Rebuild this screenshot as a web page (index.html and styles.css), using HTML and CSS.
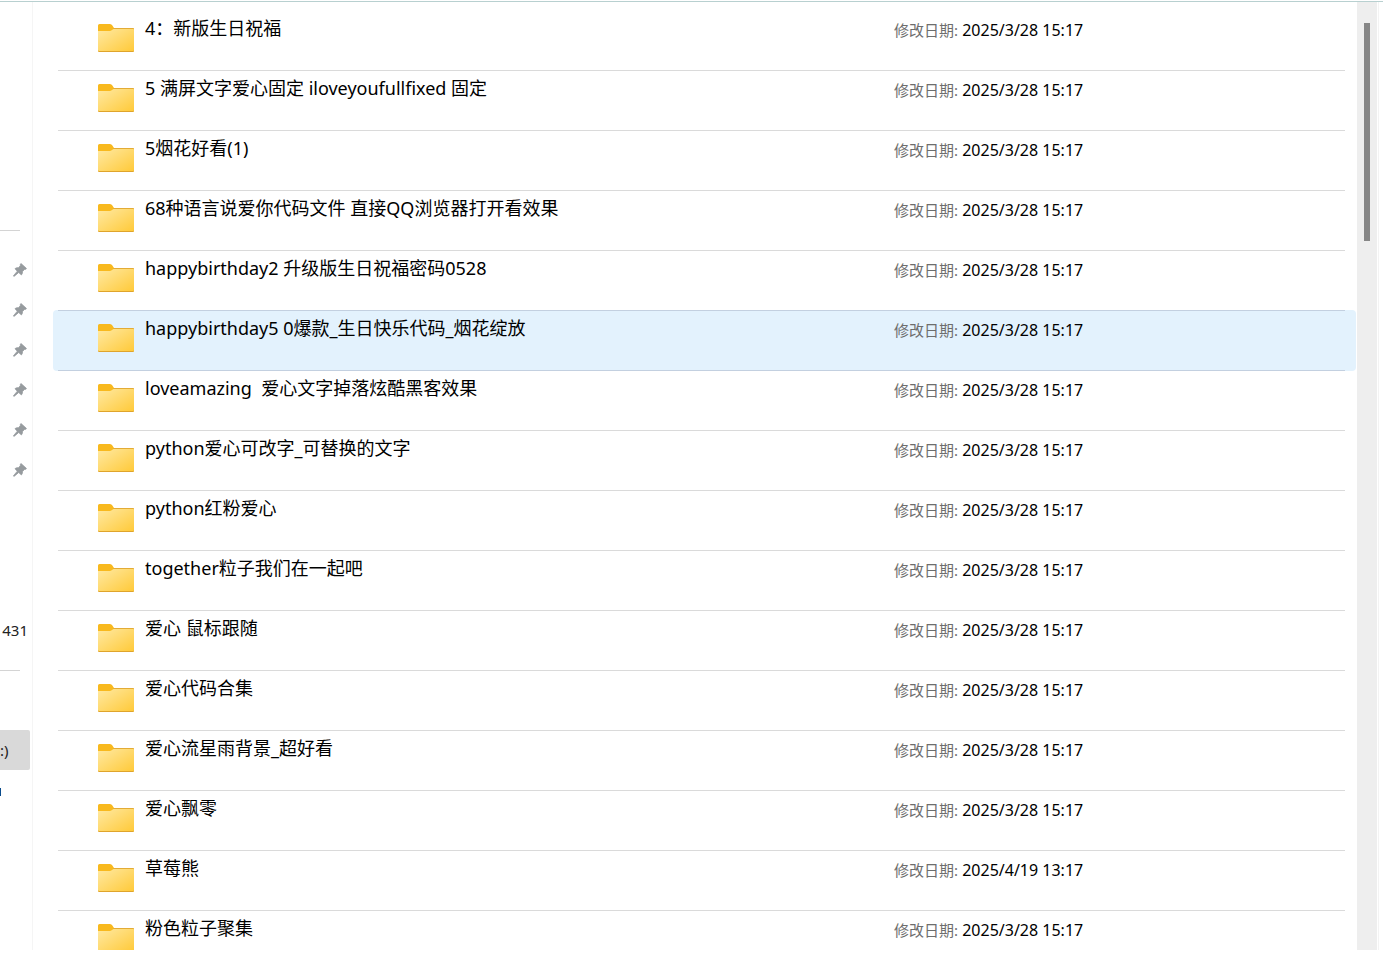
FILE: index.html
```
<!DOCTYPE html>
<html lang="zh-CN">
<head>
    <meta charset="UTF-8">
    <meta name="viewport" content="width=device-width, initial-scale=1.0">
    <link rel="stylesheet" href="styles.css">
    <title>文件</title>
</head>
<body>
<svg class="defs" width="0" height="0" aria-hidden="true">
    <defs>
        <linearGradient id="folder-front" x1="0" y1="0" x2="1" y2="1">
            <stop offset="0" stop-color="#ffe9a2"/>
            <stop offset="1" stop-color="#ffc937"/>
        </linearGradient>
        <symbol id="folder" viewBox="0 0 36 28">
            <path d="M0 1.500Q0 0 1.500 0H11.500q1.500 0 2.500 1L16 4H34.500Q36 4 36 5.500V12H0Z" fill="#f8b91e"/>
            <path d="M0 7H11.500Q13 7 14 6L15.500 5H35Q36 5 36 6V26.500Q36 28 34.500 28H1.500Q0 28 0 26.500Z" fill="url(#folder-front)"/>
            <path d="M0 26V26.500Q0 28 1.500 28H34.500Q36 28 36 26.500V26Q36 27 34.500 27H1.500Q0 27 0 26Z" fill="#dfa42c"/>
            <path d="M15.500 4H35Q36 4 36 5H15Z" fill="#e3ab35"/>
        </symbol>
        <symbol id="pin" viewBox="0 0 14 14">
            <path d="M8.300 .8 13.200 5.200Q13.600 6 12.700 6.300L11.300 6.500 9.500 8.600Q9.600 10.800 8.400 11.900L5.700 9.500 1 13.400.4 12.900 4.300 8.200 2 5.700Q3.200 4.400 5.500 4.700L7.300 2.700 7.400 1.200Q7.600.4 8.300.8Z" fill="#969b9e" stroke="#969b9e" stroke-width=".8" stroke-linejoin="round"/>
        </symbol>
    </defs>
</svg>
<div class="explorer">
    <nav class="sidebar">
        <div class="nav-space nav-space-top"></div>
        <div class="nav-divider"></div>
        <a class="nav-item" href="#" aria-label="已固定 1"><svg class="pin"><use href="#pin"/></svg></a>
        <a class="nav-item" href="#" aria-label="已固定 2"><svg class="pin"><use href="#pin"/></svg></a>
        <a class="nav-item" href="#" aria-label="已固定 3"><svg class="pin"><use href="#pin"/></svg></a>
        <a class="nav-item" href="#" aria-label="已固定 4"><svg class="pin"><use href="#pin"/></svg></a>
        <a class="nav-item" href="#" aria-label="已固定 5"><svg class="pin"><use href="#pin"/></svg></a>
        <a class="nav-item" href="#" aria-label="已固定 6"><svg class="pin"><use href="#pin"/></svg></a>
        <div class="nav-space"></div>
        <a class="nav-item" href="#">431</a>
        <div class="nav-divider"></div>
        <div class="nav-space nav-space-small"></div>
        <a class="nav-item drive active" href="#">:)</a>
        <a class="nav-item drive" href="#" aria-label="网络"><span class="dot"></span></a>
    </nav>
    <main class="files">
        <ul class="file-list">
            <li class="file"><div class="file-row"><svg class="folder"><use href="#folder"/></svg><a class="name" href="#">4：新版生日祝福</a><p class="date"><span class="label">修改日期:</span> 2025/3/28 15:17</p></div></li>
            <li class="file"><div class="file-row"><svg class="folder"><use href="#folder"/></svg><a class="name" href="#">5 满屏文字爱心固定 iloveyoufullfixed 固定</a><p class="date"><span class="label">修改日期:</span> 2025/3/28 15:17</p></div></li>
            <li class="file"><div class="file-row"><svg class="folder"><use href="#folder"/></svg><a class="name" href="#">5烟花好看(1)</a><p class="date"><span class="label">修改日期:</span> 2025/3/28 15:17</p></div></li>
            <li class="file"><div class="file-row"><svg class="folder"><use href="#folder"/></svg><a class="name" href="#">68种语言说爱你代码文件 直接QQ浏览器打开看效果</a><p class="date"><span class="label">修改日期:</span> 2025/3/28 15:17</p></div></li>
            <li class="file"><div class="file-row"><svg class="folder"><use href="#folder"/></svg><a class="name" href="#">happybirthday2 升级版生日祝福密码0528</a><p class="date"><span class="label">修改日期:</span> 2025/3/28 15:17</p></div></li>
            <li class="file selected"><div class="file-row"><svg class="folder"><use href="#folder"/></svg><a class="name" href="#">happybirthday5 0爆款_生日快乐代码_烟花绽放</a><p class="date"><span class="label">修改日期:</span> 2025/3/28 15:17</p></div></li>
            <li class="file"><div class="file-row"><svg class="folder"><use href="#folder"/></svg><a class="name" href="#">loveamazing  爱心文字掉落炫酷黑客效果</a><p class="date"><span class="label">修改日期:</span> 2025/3/28 15:17</p></div></li>
            <li class="file"><div class="file-row"><svg class="folder"><use href="#folder"/></svg><a class="name" href="#">python爱心可改字_可替换的文字</a><p class="date"><span class="label">修改日期:</span> 2025/3/28 15:17</p></div></li>
            <li class="file"><div class="file-row"><svg class="folder"><use href="#folder"/></svg><a class="name" href="#">python红粉爱心</a><p class="date"><span class="label">修改日期:</span> 2025/3/28 15:17</p></div></li>
            <li class="file"><div class="file-row"><svg class="folder"><use href="#folder"/></svg><a class="name" href="#">together粒子我们在一起吧</a><p class="date"><span class="label">修改日期:</span> 2025/3/28 15:17</p></div></li>
            <li class="file"><div class="file-row"><svg class="folder"><use href="#folder"/></svg><a class="name" href="#">爱心 鼠标跟随</a><p class="date"><span class="label">修改日期:</span> 2025/3/28 15:17</p></div></li>
            <li class="file"><div class="file-row"><svg class="folder"><use href="#folder"/></svg><a class="name" href="#">爱心代码合集</a><p class="date"><span class="label">修改日期:</span> 2025/3/28 15:17</p></div></li>
            <li class="file"><div class="file-row"><svg class="folder"><use href="#folder"/></svg><a class="name" href="#">爱心流星雨背景_超好看</a><p class="date"><span class="label">修改日期:</span> 2025/3/28 15:17</p></div></li>
            <li class="file"><div class="file-row"><svg class="folder"><use href="#folder"/></svg><a class="name" href="#">爱心飘零</a><p class="date"><span class="label">修改日期:</span> 2025/3/28 15:17</p></div></li>
            <li class="file"><div class="file-row"><svg class="folder"><use href="#folder"/></svg><a class="name" href="#">草莓熊</a><p class="date"><span class="label">修改日期:</span> 2025/4/19 13:17</p></div></li>
            <li class="file"><div class="file-row"><svg class="folder"><use href="#folder"/></svg><a class="name" href="#">粉色粒子聚集</a><p class="date"><span class="label">修改日期:</span> 2025/3/28 15:17</p></div></li>
        </ul>
    </main>
    <div class="scrollbar"><div class="thumb"></div></div>
    <div class="edge"></div>
</div>
</body>
</html>
```
FILE: styles.css
```
* {
    box-sizing: border-box;
}

body {
    margin: 0;
    padding-top: 1px;
    height: 100vh;
    overflow: hidden;
    background-color: #fff;
    color: #000;
    font-family: "Noto Sans", "Noto Sans CJK SC", sans-serif;
}

a {
    color: inherit;
    text-decoration: none;
}

.defs {
    position: absolute;
}

.explorer {
    display: flex;
    height: calc(100vh - 23px);
    border-top: 1px solid #b8d0d0;
    overflow: hidden;
}

/* navigation pane */
.sidebar {
    flex: 0 0 33px;
    padding-top: 8px;
    border-right: 1px solid #f5f5f5;
    font-size: 15px;
    overflow: hidden;
}

.nav-item {
    display: flex;
    align-items: center;
    justify-content: flex-end;
    height: 40px;
    margin-right: 2px;
    padding-right: 2px;
    color: #222;
}

.pin {
    width: 14px;
    height: 14px;
    margin-right: 1px;
}

.nav-divider {
    height: 40px;
    margin-right: 12px;
    background: linear-gradient(#d4d4d4, #d4d4d4) 0 20px / 100% 1px no-repeat;
}

.nav-space {
    height: 120px;
}

.nav-space-top {
    height: 200px;
}

.nav-space-small {
    height: 40px;
}

.drive {
    justify-content: flex-start;
    margin-right: 2px;
    padding: 0;
}

.active {
    background-color: #d9d9d9;
    border-radius: 0 2px 2px 0;
}

.dot {
    width: 1px;
    height: 8px;
    margin-top: 4px;
    background-color: #0a4c8c;
}

/* file list */
.files {
    flex: 1;
    min-width: 0;
    padding: 8px 1px 0 20px;
    overflow: hidden;
}

.file-list {
    margin: 0;
    padding: 0;
    list-style: none;
}

.file {
    height: 60px;
    padding: 0 11px 0 5px;
}

.file-row {
    display: grid;
    grid-template-columns: 36px 738fr 451fr;
    column-gap: 11px;
    height: 60px;
    padding-left: 40px;
    border-top: 1px solid #dadada;
}

.file:first-child .file-row {
    border-top-color: transparent;
}

.selected {
    height: 61px;
    margin-bottom: -1px;
    background-color: #e3f2fd;
    border-radius: 4px;
}

.selected .file-row,
.selected + .file .file-row {
    border-top-color: #c3d0e0;
}

.folder {
    width: 36px;
    height: 28px;
    margin-top: 13px;
}

.name {
    margin-top: 3px;
    font-size: 18px;
    line-height: 28px;
    white-space: pre;
}

.date {
    margin: 5px 0 0;
    font-size: 16px;
    line-height: 28px;
    white-space: nowrap;
}

.label {
    font-size: 15px;
    color: #6d6d6d;
}

/* scrollbar */
.scrollbar {
    flex: 0 0 20px;
    padding: 21px 7px 0;
    background-color: #eee;
}

.thumb {
    width: 6px;
    height: 218px;
    background-color: #868686;
}

.edge {
    flex: 0 0 6px;
    border-left: 1px solid #fff;
    background: linear-gradient(to right, #f3f3f3 1px, #fff 1px);
}
```
